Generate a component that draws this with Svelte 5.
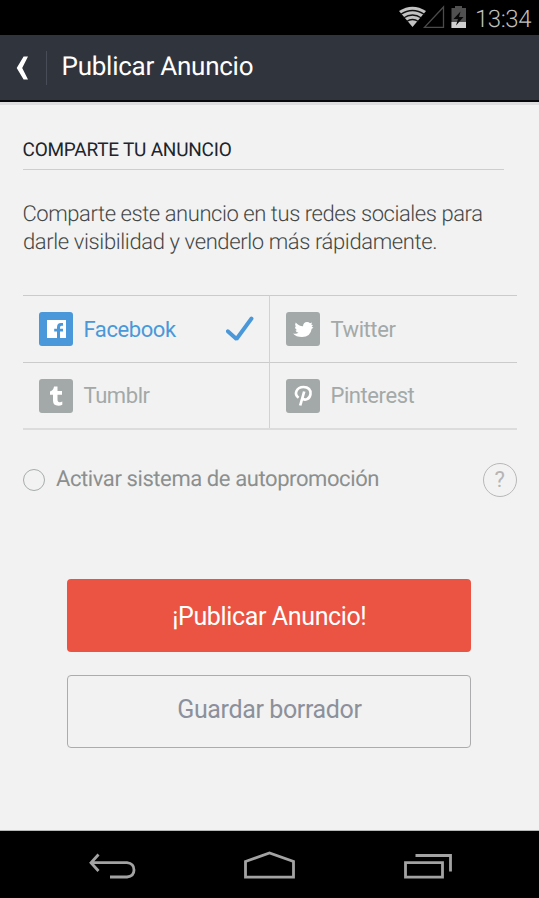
<script>
  let selected = $state('Facebook');
  let promo = $state(false);
  const networks = ['Facebook', 'Twitter', 'Tumblr', 'Pinterest'];
</script>

<div class="screen">
  <div class="status">
    <svg class="signals" width="70" height="35" viewBox="0 0 70 35">
      <path d="M1 11Q14.500 2.500 28 11L14.500 27Z" fill="#c3c3c3" />
      <path d="M2.500 14.500Q14.500 6.500 26.500 14.500M5.500 18Q14.500 12 23.500 18M8.500 21.500Q14.500 17.500 20.500 21.500" fill="none" stroke="#111" stroke-width="1.300" />
      <path d="M45.500 7V27.300H26.500Z" fill="none" stroke="#4b4b4b" stroke-width="1.300" />
      <path d="M53.500 8H57V6H64V8H68V28H53.500Z" fill="#505050" />
      <path d="M53.500 22H68V28H53.500Z" fill="#d0d0d0" />
      <path d="M62.500 11.500L55.500 19H60L58 25.500L65.500 17H61Z" fill="#080808" />
    </svg>
    <span>13:34</span>
  </div>

  <header>
    <svg class="back" width="12" height="24" viewBox="0 0 12 24"><path d="M7.600 0.500H12L6.200 12L12 23.500H7.600L0.700 12Z" fill="#fff" /></svg>
    <i></i>
    <h1>Publicar Anuncio</h1>
  </header>

  <main>
    <h2>COMPARTE TU ANUNCIO</h2>
    <p><span class="l1">Comparte este anuncio en tus redes sociales para</span><br /><span class="l2">darle visibilidad y venderlo más rápidamente.</span></p>

    <div class="networks">
      {#each networks as name}
        <button class="network {name.toLowerCase()}" class:on={selected === name} onclick={() => (selected = name)}>
          <svg width="34" height="34" viewBox="0 0 34 34">
            <rect width="34" height="34" rx="3" fill="currentColor" />
            {#if name === 'Facebook'}
              <path d="M8 8H27V26H8Z" fill="#fff" />
              <path d="M18 26V19.500H15.200V16.700H18V15.300Q18 11 22 11H24V13.800H22.500Q21 13.800 21 15.500V16.700H24V19.500H21V26Z" fill="currentColor" />
            {:else if name === 'Twitter'}
              <path d="M7 21.500Q10 22.500 12.500 20.800Q10 20.500 9.500 18.200H11Q8.700 16.500 9 14.500L10.300 14.800Q8.400 12.500 9.700 10.500Q12.700 14 17 14.200Q17.200 10.200 21 10Q23 10 24 11.300L26 10.600L25.300 12.800L27 13L25.700 14.700L27.500 15.800L25.700 16.700Q24.500 25 16 25Q10 25 7 21.500Z" fill="#fff" />
            {:else if name === 'Tumblr'}
              <path d="M15 7.500H18.500V12H23V15.700H18.500V20.500Q18.500 23.500 21 23.200Q22 23.200 23.300 22.500V25.800Q21.500 26.700 19.300 26.700Q14 26.700 14 21.500V15.700H11V12.600Q14.500 11.500 15 7.500Z" fill="#fff" />
            {:else}
              <path d="M12.600 18.700C7.500 15 10.500 8 17.500 8C22.500 8 25 11 24.500 15C24 20 18.500 22.500 16.300 19" fill="none" stroke="#fff" stroke-width="2.600" />
              <path d="M18.200 12.500L14.200 26.500" stroke="#fff" stroke-width="2.700" />
            {/if}
          </svg>
          <span>{name}</span>
          {#if selected === name}
            <svg class="check" width="28" height="27" viewBox="0 0 28 27"><path d="M1.800 15.200L10.500 23L25.500 2.500" fill="none" stroke="currentColor" stroke-width="3.900" stroke-linecap="round" stroke-linejoin="bevel" /></svg>
          {/if}
        </button>
      {/each}
    </div>

    <div class="promo">
      <button class="radio" class:checked={promo} aria-label="Activar" onclick={() => (promo = !promo)}></button>
      <span>Activar sistema de autopromoción</span>
      <button class="help">?</button>
    </div>

    <button class="publish">¡Publicar Anuncio!</button>
    <button class="draft">Guardar borrador</button>
  </main>

  <nav>
    <svg width="539" height="68" viewBox="0 0 539 68" fill="none" stroke="#a3a3a3" stroke-width="2.800">
      <path d="M0 0.500H539" stroke="#b4b8b7" stroke-width="1" />
      <path d="M98.500 24.500L91 32.700L98.500 41M91 32.700H127Q134 33.500 134 40Q134 46.300 127 47H110" />
      <path d="M245.500 31.500L269.500 23L293.500 31.500V47.200H245.500Z" />
      <path d="M405.500 32.700H442.500V47.200H405.500ZM415.500 25.500H450.500V41.500" />
    </svg>
  </nav>
</div>

<style>
  :global(body) { margin: 0; background: #f2f2f2; }
  .screen { width: 539px; height: 898px; display: flex; flex-direction: column; background: #f2f2f2; font-family: Roboto, sans-serif; text-rendering: geometricPrecision; overflow: hidden; }
  .status { box-sizing: border-box; height: 35px; background: #000; display: flex; justify-content: flex-end; padding-right: 8px; gap: 6px; color: #bfbfbf; font-size: 24px; line-height: 38px; font-weight: 300; letter-spacing: -0.450px; flex: none; }
  .status span { width: 56px; white-space: nowrap; }
  .signals { margin-right: 1px; margin-left: -1px; }
  header { box-sizing: border-box; height: 70px; background: #30343d; border-bottom: 3px solid #dedee0; box-shadow: inset 0 -2px #07080c; display: flex; padding-left: 16px; flex: none; }
  .back { margin-top: 21px; }
  header i { width: 1px; height: 34px; margin: 16px 14.500px 0 18px; background: #484c57; }
  h1 { margin: 0; color: #fff; font-size: 26px; font-weight: 400; line-height: 65px; letter-spacing: -0.250px; white-space: nowrap; }
  main { flex: 1; padding: 0 22px 0 23px; display: flex; flex-direction: column; }
  h2 { box-sizing: border-box; width: 481px; height: 65px; margin: 0; padding-top: 32px; border-bottom: 1px solid #cecece; color: #20242c; font-size: 19px; font-weight: 400; line-height: 25px; letter-spacing: -0.230px; white-space: nowrap; text-indent: -0.500px; }
  p { height: 56px; margin: 31px 0 0; color: #434746; font-size: 22px; font-weight: 300; line-height: 28px; white-space: nowrap; text-indent: -0.500px; }
  .l1 { letter-spacing: -0.430px; }
  .l2 { letter-spacing: -0.380px; }
  button { font: inherit; letter-spacing: inherit; padding: 0; margin: 0; border: 0; background: none; text-align: left; }
  .networks { margin-top: 38px; display: grid; grid-template-columns: 247px 247px; grid-template-rows: 67px 66px; border-bottom: 2px solid #dcdcdc; letter-spacing: -0.430px; }
  .network { box-sizing: border-box; border-top: 1px solid #cbcbcb; display: flex; align-items: center; padding: 0 15px 0 16px; color: #a3a9a8; font-size: 22px; }
  .network:nth-child(odd) { border-right: 1px solid #d2d2d2; }
  .network span { margin-left: 10.500px; }
  .network.on { color: #4a98d9; }
  .check { margin-left: auto; }
  .promo { display: flex; align-items: center; height: 34px; margin-top: 33px; color: #8b8f8f; font-size: 22px; letter-spacing: -0.410px; white-space: nowrap; }
  .radio { box-sizing: border-box; width: 22px; height: 22px; border: 1px solid #a5adab; border-radius: 50%; }
  .radio.checked { background: #4a98d9; }
  .promo span { margin: 0 0 1px 11px; }
  .help { box-sizing: border-box; width: 34px; height: 34px; margin-left: auto; border: 1.500px solid #b8b8b8; border-radius: 50%; color: #b5b5b5; text-align: center; padding: 0 1px 1px 0; }
  .publish, .draft { box-sizing: border-box; width: 404px; height: 73px; margin-left: 44.400px; text-align: center; border-radius: 4px; font-size: 25px; letter-spacing: -0.370px; white-space: nowrap; flex: none; }
  .publish { margin-top: 82px; background: #eb5442; color: #fff; padding-top: 1px; }
  .draft { margin-top: 23px; border: 1.500px solid #acacae; color: #8c909b; padding-bottom: 5px; }
  nav { height: 68px; background: #000; flex: none; }
  nav svg { display: block; }
</style>
